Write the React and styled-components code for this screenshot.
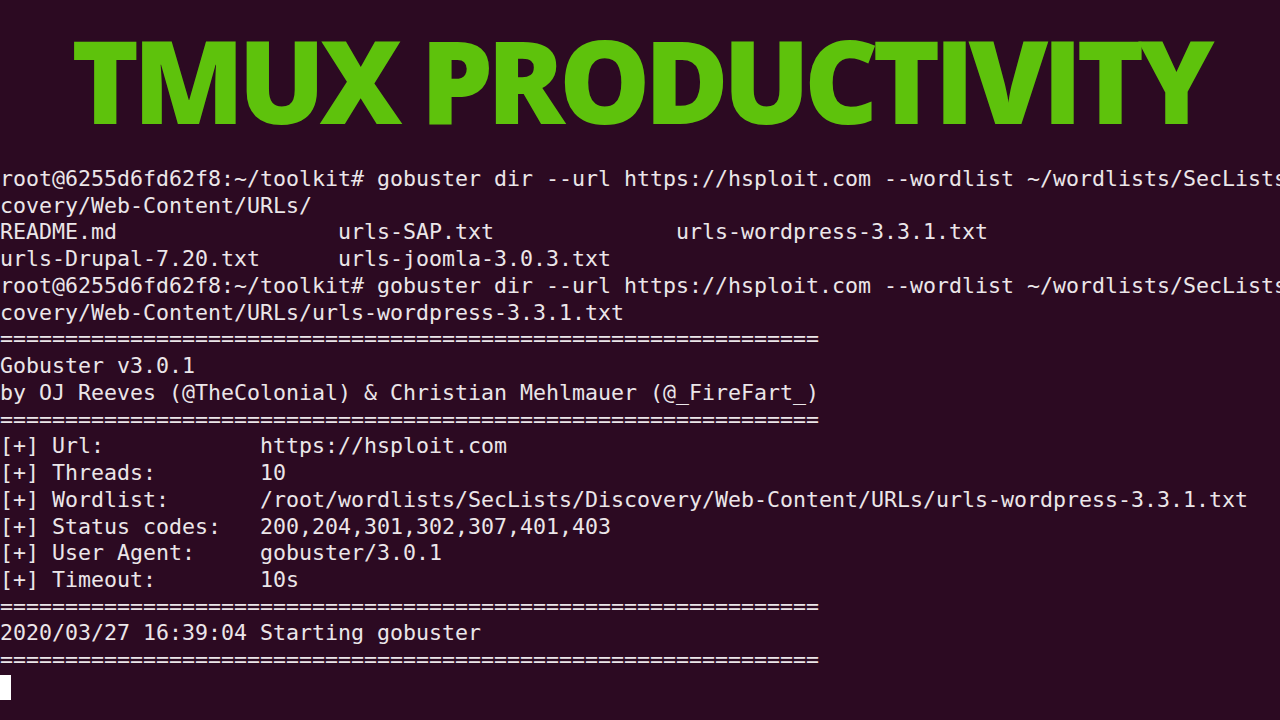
import styled, { createGlobalStyle } from "styled-components";

const GlobalStyle = createGlobalStyle`
	html, body {
		margin: 0;
		padding: 0;
		background-color: #2c0a22;
	}
`;

const lines = [
	"root@6255d6fd62f8:~/toolkit# gobuster dir --url https://hsploit.com --wordlist ~/wordlists/SecLists/Dis",
	"covery/Web-Content/URLs/",
	"README.md                 urls-SAP.txt              urls-wordpress-3.3.1.txt",
	"urls-Drupal-7.20.txt      urls-joomla-3.0.3.txt",
	"root@6255d6fd62f8:~/toolkit# gobuster dir --url https://hsploit.com --wordlist ~/wordlists/SecLists/Dis",
	"covery/Web-Content/URLs/urls-wordpress-3.3.1.txt",
	"===============================================================",
	"Gobuster v3.0.1",
	"by OJ Reeves (@TheColonial) & Christian Mehlmauer (@_FireFart_)",
	"===============================================================",
	"[+] Url:            https://hsploit.com",
	"[+] Threads:        10",
	"[+] Wordlist:       /root/wordlists/SecLists/Discovery/Web-Content/URLs/urls-wordpress-3.3.1.txt",
	"[+] Status codes:   200,204,301,302,307,401,403",
	"[+] User Agent:     gobuster/3.0.1",
	"[+] Timeout:        10s",
	"===============================================================",
	"2020/03/27 16:39:04 Starting gobuster",
	"===============================================================",
];

export default function App() {
	return (
		<>
			<GlobalStyle />
			<Screen>
				<Title>TMUX PRODUCTIVITY</Title>
				<Terminal>
					{lines.map((l, i) => (
						<Line key={i}>{l}</Line>
					))}
					<Line>
						<Cursor />
					</Line>
				</Terminal>
			</Screen>
		</>
	);
}

const Screen = styled.div`
	width: 1280px;
	height: 720px;
	overflow: hidden;
	background-color: #2c0a22;
	display: flex;
	flex-direction: column;
`;

const Title = styled.h1`
	margin: 0;
	height: 166px;
	display: flex;
	justify-content: center;
	align-items: center;
	padding: 0 0 8px 0;
	box-sizing: border-box;
	font-family: "Open Sans", sans-serif;
	font-weight: 800;
	font-size: 115px;
	letter-spacing: -6px;
	color: #5ec20c;
	white-space: nowrap;
`;

const Terminal = styled.div`
	font-family: "DejaVu Sans Mono", monospace;
	font-size: 21.6px;
	line-height: 26.74px;
	color: #ebe6e9;
`;

const Line = styled.div`
	height: 26.74px;
	white-space: pre;
	overflow: hidden;
	display: flex;
	align-items: center;
`;

const Cursor = styled.span`
	display: inline-block;
	width: 11px;
	height: 25px;
	background-color: #ffffff;
`;
